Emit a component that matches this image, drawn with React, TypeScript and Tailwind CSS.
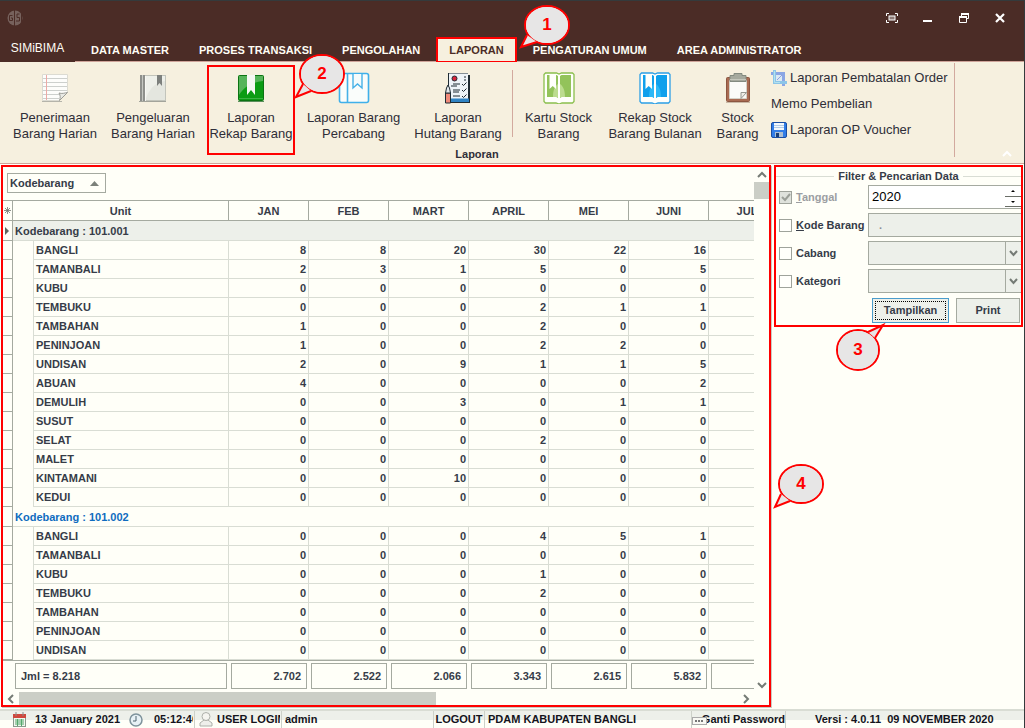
import type { ReactNode } from 'react';

const months = ['JAN', 'FEB', 'MART', 'APRIL', 'MEI', 'JUNI', 'JULI'];

type Row = [string, number[]];

const groups: { code: string; selected: boolean; rows: Row[] }[] = [
  {
    code: '101.001',
    selected: true,
    rows: [
      ['BANGLI', [8, 8, 20, 30, 22, 16]],
      ['TAMANBALI', [2, 3, 1, 5, 0, 5]],
      ['KUBU', [0, 0, 0, 0, 0, 0]],
      ['TEMBUKU', [0, 0, 0, 2, 1, 1]],
      ['TAMBAHAN', [1, 0, 0, 2, 0, 0]],
      ['PENINJOAN', [1, 0, 0, 2, 2, 0]],
      ['UNDISAN', [2, 0, 9, 1, 1, 5]],
      ['ABUAN', [4, 0, 0, 0, 0, 2]],
      ['DEMULIH', [0, 0, 3, 0, 1, 1]],
      ['SUSUT', [0, 0, 0, 0, 0, 0]],
      ['SELAT', [0, 0, 0, 2, 0, 0]],
      ['MALET', [0, 0, 0, 0, 0, 0]],
      ['KINTAMANI', [0, 0, 10, 0, 0, 0]],
      ['KEDUI', [0, 0, 0, 0, 0, 0]],
    ],
  },
  {
    code: '101.002',
    selected: false,
    rows: [
      ['BANGLI', [0, 0, 0, 4, 5, 1]],
      ['TAMANBALI', [0, 0, 0, 0, 0, 0]],
      ['KUBU', [0, 0, 0, 1, 0, 0]],
      ['TEMBUKU', [0, 0, 0, 2, 0, 0]],
      ['TAMBAHAN', [0, 0, 0, 0, 0, 0]],
      ['PENINJOAN', [0, 0, 0, 0, 0, 0]],
      ['UNDISAN', [0, 0, 0, 0, 0, 0]],
    ],
  },
];

const totals = ['2.702', '2.522', '2.066', '3.343', '2.615', '5.832', ''];

function Callout({ n, className, tail, cx, cy, rx, ry, w, h }: {
  n: number; className: string; tail: string; cx: number; cy: number; rx: number; ry: number; w: number; h: number;
}) {
  return (
    <svg className={`pointer-events-none absolute z-10 overflow-visible ${className}`} width={w} height={h} viewBox={`0 0 ${w} ${h}`}>
      <ellipse cx={cx} cy={cy} rx={rx} ry={ry} fill="#e7e6e6" stroke="#ff0000" strokeWidth="2" />
      <path d={tail} fill="#e7e6e6" stroke="#ff0000" strokeWidth="2" />
      <ellipse cx={cx} cy={cy} rx={rx - 1} ry={ry - 1} fill="#e7e6e6" />
      <text x={cx} y={cy + 5} textAnchor="middle" fontSize="17" fontWeight="700" fill="#ff0000" fontFamily="Liberation Sans, sans-serif">{n}</text>
    </svg>
  );
}

function PaperIcon() {
  return (
    <svg width="32" height="32" viewBox="0 0 32 32">
      <path d="M3.500 2.500h25v18l-8 8h-17z" fill="#fdfdfb" stroke="#dcdbd2" />
      <path d="M4 6.500h24M4 10.500h24M4 14.500h24M4 18.500h24M4 22.500h18M4 26.500h16" stroke="#cdd0cd" />
      <path d="M7.500 3v25" stroke="#edaaa6" />
      <path d="M28.500 20.500l-8 8c1-3 1-5-.5-7.500 3 1 5.500 0 8.500-.5z" fill="#e9eae5" stroke="#9b9c96" />
      <path d="M3 29.500h20" stroke="#b5b4aa" />
    </svg>
  );
}

function GrayBookIcon() {
  return (
    <svg width="32" height="32" viewBox="0 0 32 32">
      <rect x="3.500" y="3.500" width="25" height="25" fill="#e4e6df" stroke="#c2c4bb" />
      <path d="M9 26C14 14 20 10 28 9V4H9z" fill="#eef0ea" />
      <rect x="3" y="3" width="5" height="26" fill="#8e908c" />
      <path d="M5.500 3v26" stroke="#c6c8c3" />
      <path d="M8.500 4v25" stroke="#f8f8f4" />
      <path d="M20 3h5v11l-2.500-3-2.500 3z" fill="#7d807d" />
      <path d="M2 29.500h27" stroke="#a3a49b" />
    </svg>
  );
}

function GreenBookIcon() {
  return (
    <svg width="32" height="32" viewBox="0 0 32 32">
      <rect x="3.500" y="3.500" width="25" height="25" rx="1" fill="#0c9c14" stroke="#0b7413" />
      <path d="M4 4h24v5C17 10 9 15 4 23z" fill="#56b45a" />
      <path d="M4 26.500h24" stroke="#3cb143" />
      <path d="M3 29.500h26" stroke="#5b8f5c" />
      <path d="M12 3h8v20l-4-5-4 5z" fill="#f6f8f4" />
    </svg>
  );
}

function BlueOutlineBookIcon() {
  return (
    <svg width="32" height="32" viewBox="0 0 32 32">
      <rect x="1.500" y="1.500" width="29" height="29" rx="2" fill="#fafdfb" stroke="#3fb0ea" strokeWidth="1.600" />
      <path d="M9.500 2v28" stroke="#46b1e7" strokeWidth="1.600" />
      <path d="M15 2v14l4.500-4 4.500 4V2" fill="#f5fbfb" stroke="#46b1e7" strokeWidth="1.400" />
    </svg>
  );
}

function ChecklistIcon() {
  return (
    <svg width="32" height="32" viewBox="0 0 32 32">
      <path d="M6 1h20v2h2v28H8V29H6z" fill="#1f2b33" />
      <rect x="7" y="1.500" width="19" height="25.500" fill="#eef3f8" />
      <rect x="8" y="26.500" width="19" height="3.500" fill="#2f83c4" />
      <circle cx="12.500" cy="6.500" r="2.500" fill="#d9243b" stroke="#1f2b33" />
      <path d="M22 5h2M22 8h2M11 12h7M9 14h6M11 18h7M11 20h6M11 24h7" stroke="#1f2b33" />
      <path d="M20 12l1.500 1.500 3-3M20 18l1.500 1.500 3-3M20 24l1.500 1.500 3-3" stroke="#1f2b33" fill="none" />
      <path d="M3.500 21h5v10h-5z" fill="#f08a7a" stroke="#1f2b33" />
      <path d="M3.500 21l1-5 1.500-3 1.500 3 1 5z" fill="#e4e8ec" stroke="#1f2b33" />
    </svg>
  );
}

function OpenBookIcon({ edge, fill, light }: { edge: string; fill: string; light: string }) {
  return (
    <svg width="32" height="32" viewBox="0 0 32 32">
      <path d="M2.500 1h11L16 2l2.500-1h11L31 2.500v27L29.500 31H19l-3 1-3-1H2.500L1 29.500v-27z" fill="#fffffb" stroke={edge} strokeWidth="1.300" />
      <path d="M4 3h9.500l1.500 1v22l-1.500-1H4z" fill={fill} />
      <path d="M28 3h-9.500L17 4v22l1.500-1H28z" fill={fill} />
      <path d="M10 25c0-7 2-11 5-13v14l-1.500-1zM17 12c3 2 5 6 5 13h-3.500L17 26z" fill={light} />
      <path d="M6.500 2H13v15l-3.300-3-3.200 3z" fill="#fffffb" />
    </svg>
  );
}

function ClipboardIcon() {
  return (
    <svg width="32" height="32" viewBox="0 0 32 32">
      <rect x="4.500" y="5.500" width="23" height="24" rx="1" fill="#a96b52" stroke="#8c5641" />
      <path d="M7.500 8.500h17v18h-17z" fill="#fbfbf8" stroke="#d5d2c8" />
      <path d="M12 1.500h8v2h4v6H8v-6h4z" fill="#a5a99e" stroke="#838a80" />
      <path d="M8 7.500h16" stroke="#c4c7bd" />
      <path d="M24.500 20.500l-5.500 6v-6z" fill="#eeede6" stroke="#969891" />
      <path d="M4 30.500h24" stroke="#c9b8a6" />
    </svg>
  );
}

function CropIcon() {
  return (
    <svg width="16" height="16" viewBox="0 0 16 16" className="shrink-0">
      <rect x="4" y="4" width="8" height="8" fill="#dbeaf3" />
      <path d="M0 3.500h12.500V16" fill="none" stroke="#8ba6e4" strokeWidth="3" />
      <path d="M3.500 0v12.500H16" fill="none" stroke="#8cc5e8" strokeWidth="3" />
      <path d="M3.500 1v11.500H9" fill="none" stroke="#b5e2ee" strokeWidth="1" />
      <path d="M6 10l5-5" stroke="#8f9ee1" />
    </svg>
  );
}

function SaveIcon() {
  return (
    <svg width="16" height="16" viewBox="0 0 16 16" className="shrink-0">
      <rect x=".5" y=".5" width="15" height="15" rx="1.500" fill="#317de8" stroke="#1b4ea3" />
      <rect x="3" y="1" width="10" height="7" fill="#f3f8fc" />
      <path d="M3 3.500h10M3 5.500h10" stroke="#b3cbe6" />
      <rect x="4" y="10" width="8" height="5" fill="#aebfd2" />
      <rect x="5" y="11" width="3" height="4" fill="#173d78" />
    </svg>
  );
}

function Chevron({ d, label }: { d: string; label: string }) {
  return (
    <button type="button" aria-label={label} className="flex h-3 w-4 shrink-0 items-center justify-center">
      <svg width="10" height="10" viewBox="0 0 10 10"><path d={d} fill="none" stroke="#757b75" strokeWidth="2" /></svg>
    </button>
  );
}

function RibbonButton({ icon, lines, className }: { icon: ReactNode; lines: [string, string]; className: string }) {
  return (
    <button type="button" className={`flex h-[90px] shrink-0 flex-col items-center pt-[7px] text-[13px] leading-4 font-normal whitespace-nowrap ${className}`}>
      {icon}
      <span className="mt-1.5 flex flex-col items-center"><span>{lines[0]}</span><span>{lines[1]}</span></span>
    </button>
  );
}

function Tab({ children }: { children: ReactNode }) {
  return <button type="button" className="h-[26px] px-[14px] pt-1 text-[#fffdf5]">{children}</button>;
}

function Header() {
  return (
    <header className="relative z-20 flex flex-col border-t border-[#343a3c] bg-[#4b2c26]">
      <div className="flex h-[34px] items-center justify-between pr-[18px] pl-1.5 text-white">
        <svg width="18" height="18" viewBox="0 0 18 18">
          <circle cx="9" cy="9" r="7.500" fill="#76615c" />
          <path d="M8.500 1v16M6.500 6.500H3.500v5h3V9H5M13.500 5H11v3.500h2.500V12H10M15.500 5v8" stroke="#4b2c26" fill="none" />
        </svg>
        <div className="flex items-center gap-6">
          <button type="button" aria-label="Full screen">
            <svg width="12" height="12" viewBox="0 0 12 12"><path d="M.5 4V1.500H3M9 1.500h2.500V4M11.500 8v2.500H9M3 10.500H.5V8" fill="none" stroke="white" /><rect x="3" y="4" width="6" height="4" fill="#8d7a76" stroke="white" /></svg>
          </button>
          <button type="button" aria-label="Minimize">
            <svg width="12" height="12" viewBox="0 0 12 12"><path d="M1 9h9" stroke="white" strokeWidth="2" /></svg>
          </button>
          <button type="button" aria-label="Restore">
            <svg width="12" height="12" viewBox="0 0 12 12"><path d="M3.500 4V1.500h7v5H9" fill="none" stroke="white" /><path d="M3 2h8M1 5h8" stroke="white" strokeWidth="2" /><path d="M1.500 4.500h7v6h-7z" fill="none" stroke="white" /></svg>
          </button>
          <button type="button" aria-label="Close">
            <svg width="12" height="12" viewBox="0 0 12 12"><path d="M2 2l8 8M10 2l-8 8" stroke="white" strokeWidth="2.200" /></svg>
          </button>
        </div>
      </div>
      <nav className="flex h-[26px] gap-0.5 text-[11px] font-bold whitespace-nowrap">
        <button type="button" className="h-[27px] w-[75px] bg-[#4b2c26] pb-px text-[12px] font-normal text-[#fffdf5]">SIMiBIMA</button>
        <Tab>DATA MASTER</Tab>
        <Tab>PROSES TRANSAKSI</Tab>
        <Tab>PENGOLAHAN</Tab>
        <button type="button" className="mt-0.5 h-[26px] border-2 border-[#ff0000] bg-[#f6f0df] px-[11px] text-[#4b2c26]">LAPORAN</button>
        <Tab>PENGATURAN UMUM</Tab>
        <Tab>AREA ADMINISTRATOR</Tab>
      </nav>
      <Callout n={1} className="top-1 left-[519px]" w={52} h={44} cx={28} cy={20} rx={22} ry={19} tail="M8 30L2 42L18 37" />
    </header>
  );
}

function Ribbon() {
  return (
    <section className="relative z-30 flex border-b border-[#cfa49a] bg-[#f6f0df] text-[#2f2e38]">
      <div className="flex h-[101px] shrink-0 flex-col">
        <div className="flex pt-[3px] pl-[11px]">
          <div className="flex gap-[10px]">
            <RibbonButton icon={<PaperIcon />} lines={['Penerimaan', 'Barang Harian']} className="w-[88px]" />
            <RibbonButton icon={<GrayBookIcon />} lines={['Pengeluaran', 'Barang Harian']} className="w-[88px]" />
            <RibbonButton icon={<GreenBookIcon />} lines={['Laporan', 'Rekap Barang']} className="w-[88px] outline-2 -outline-offset-2 outline-[#ff0000]" />
            <RibbonButton icon={<BlueOutlineBookIcon />} lines={['Laporan Barang', 'Percabang']} className="w-[97px]" />
            <RibbonButton icon={<ChecklistIcon />} lines={['Laporan', 'Hutang Barang']} className="w-[92px]" />
          </div>
          <div className="mx-2 mt-[5px] h-[67px] w-px bg-[#d2a99e]" />
          <div className="flex gap-[10px]">
            <RibbonButton icon={<OpenBookIcon edge="#8bbf4d" fill="#93c35a" light="#bcdc8e" />} lines={['Kartu Stock', 'Barang']} className="w-[75px]" />
            <RibbonButton icon={<OpenBookIcon edge="#2b9fe6" fill="#0fa0ec" light="#2bb8f6" />} lines={['Rekap Stock', 'Barang Bulanan']} className="w-[98px]" />
            <RibbonButton icon={<ClipboardIcon />} lines={['Stock', 'Barang']} className="w-[47px]" />
            <div className="flex w-[183px] flex-col text-[13px] leading-4 font-normal whitespace-nowrap">
              <button type="button" className="flex h-[26px] items-center gap-[3px]"><CropIcon />Laporan Pembatalan Order</button>
              <button type="button" className="flex h-[26px] items-center">Memo Pembelian</button>
              <button type="button" className="flex h-[26px] items-center gap-[3px]"><SaveIcon />Laporan OP Voucher</button>
            </div>
          </div>
        </div>
        <div className="-mt-2 text-center text-[11px] leading-[14px] font-bold">Laporan</div>
      </div>
      <div className="mt-px h-[94px] w-px bg-[#d2a99e]" />
      <button type="button" aria-label="Collapse ribbon" className="mr-3 mb-1 ml-auto self-end">
        <svg width="10" height="10" viewBox="0 0 10 10"><path d="M1 7l4-4 4 4" fill="none" stroke="white" strokeWidth="2" /></svg>
      </button>
      <Callout n={2} className="-top-[9px] left-[294px]" w={54} h={48} cx={28} cy={21} rx={22} ry={19} tail="M9 31L2 44L17 38" />
    </section>
  );
}

function Grid() {
  return (
    <section className="relative mr-[3px] ml-px flex min-w-0 flex-1 flex-col border-2 border-[#ff0000] shadow-[1px_1px_0_#c9ccc4]">
      <div className="flex flex-1">
        <div className="min-w-0 flex-1 overflow-hidden">
          <button type="button" className="mt-1.5 mb-[7px] ml-1 flex h-5 w-[99px] items-center justify-between border border-[#a5aaa0] pr-1.5 pl-0.5">
            Kodebarang
            <svg width="9" height="5" viewBox="0 0 9 5"><path d="M0 5l4.500-5L9 5z" fill="#7c817a" /></svg>
          </button>
          <table className="w-[786px] min-w-full table-fixed border-separate border-spacing-0 leading-4">
            <colgroup>
              <col className="w-[10px]" />
              <col className="w-[21px]" />
              <col className="w-[195px]" />
              {months.map((m) => <col key={m} className="w-[80px]" />)}
            </colgroup>
            <thead>
              <tr className="h-[21px]">
                <th className="border-y border-r border-[#a5aaa0] p-0">
                  <svg width="9" height="9" viewBox="0 0 9 9"><path d="M4.500 1v7M1 4.500h7M2 2l5 5M7 2L2 7" stroke="#6f756f" strokeWidth=".8" /></svg>
                </th>
                <th colSpan={2} className="border-y border-r border-[#a5aaa0] p-0">Unit</th>
                {months.map((m) => <th key={m} className="border-y border-r border-[#a5aaa0] p-0">{m}</th>)}
              </tr>
            </thead>
            {groups.map((g) => (
              <tbody key={g.code}>
                <tr className="h-5">
                  <td className="border-r border-b border-[#a5aaa0] p-0">
                    {g.selected && <svg width="9" height="8" viewBox="0 0 9 8"><path d="M2 0l4 4-4 4z" fill="#5f655f" /></svg>}
                  </td>
                  <td colSpan={9} className={g.selected ? 'border-b border-[#d9ddd4] bg-[#edf0ea] p-0 pl-0.5' : 'border-b border-[#d9ddd4] p-0 pl-0.5 text-[#0f6cbf]'}>
                    Kodebarang : {g.code}
                  </td>
                </tr>
                {g.rows.map(([unit, values]) => (
                  <tr key={unit} className="h-[19px]">
                    <td className="border-r border-b border-[#a5aaa0] p-0" />
                    <td className="border-r border-[#d9ddd4] p-0" />
                    <td className="border-r border-b border-[#d9ddd4] p-0 pl-0.5">{unit}</td>
                    {months.map((m, i) => (
                      <td key={m} className="border-r border-b border-[#d9ddd4] p-0 pr-0.5 text-right">{values[i]}</td>
                    ))}
                  </tr>
                ))}
              </tbody>
            ))}
            <tfoot>
              <tr>
                <td className="border-t border-[#a5aaa0] p-0" />
                <td colSpan={2} className="border-t border-[#a5aaa0] p-0.5">
                  <div className="flex h-[26px] items-center border border-[#a5aaa0] px-[5px]">Jml = 8.218</div>
                </td>
                {totals.map((t, i) => (
                  <td key={months[i]} className="border-t border-[#a5aaa0] p-0.5">
                    <div className="flex h-[26px] items-center justify-end border border-[#a5aaa0] px-[5px]">{t}</div>
                  </td>
                ))}
              </tr>
            </tfoot>
          </table>
        </div>
        <div className="flex w-[15px] shrink-0 flex-col items-center">
          <div className="flex h-[15px] items-center"><Chevron label="Scroll up" d="M1 7l4-4 4 4" /></div>
          <div className="h-[17px] w-full bg-[#cbcec6]" />
          <div className="mt-auto"><Chevron label="Scroll down" d="M1 3l4 4 4-4" /></div>
        </div>
      </div>
      <div className="mt-px flex h-[13px] items-center pr-[15px]">
        <Chevron label="Scroll left" d="M7 1L3 5l4 4" />
        <div className="h-full flex-1"><div className="h-full w-[58%] bg-[#cbcec6]" /></div>
        <Chevron label="Scroll right" d="M3 1l4 4-4 4" />
      </div>
      <Callout n={4} className="top-[296px] -right-[56px]" w={52} h={46} cx={28} cy={21} rx={22} ry={19} tail="M8 31L2 44L17 38" />
    </section>
  );
}

function FilterRow({ id, label, hotkey, checked, children }: {
  id: string; label: string; hotkey?: boolean; checked?: boolean; children: ReactNode;
}) {
  return (
    <div className="flex h-6 items-center">
      <input
        id={id}
        type="checkbox"
        defaultChecked={checked}
        disabled={checked}
        className="peer h-[13px] w-[13px] shrink-0 appearance-none border border-[#9fa39b] bg-[#fffffb] disabled:bg-[#dfe2dc]"
      />
      {checked && (
        <svg className="pointer-events-none -ml-[13px]" width="13" height="13" viewBox="0 0 13 13"><path d="M3 6l3 3 5-6" fill="none" stroke="#9b9f98" strokeWidth="2" /></svg>
      )}
      <label htmlFor={id} className={checked ? 'w-[76px] shrink-0 pl-1 text-[#9c9ea2]' : 'w-[76px] shrink-0 pl-1'}>
        {hotkey ? <><u>{label[0]}</u>{label.slice(1)}</> : label}
      </label>
      {children}
    </div>
  );
}

function DisabledSelect({ label }: { label: string }) {
  return (
    <div className="flex h-6 min-w-0 flex-1 border border-r-0 border-[#a5aaa0] bg-[#edf0ea]">
      <select aria-label={label} disabled className="min-w-0 flex-1 appearance-none"><option> </option></select>
      <div className="flex w-4 items-center justify-center border-l border-[#a5aaa0]">
        <svg width="9" height="8" viewBox="0 0 9 8"><path d="M1 2l3.500 4L8 2" fill="none" stroke="#757b75" strokeWidth="2" /></svg>
      </div>
    </div>
  );
}

function Filter() {
  return (
    <aside className="relative mr-px w-[249px] shrink-0 self-start border-2 border-[#ff0000]">
      <form onSubmit={(e) => e.preventDefault()}>
        <h2 className="flex h-[18px] items-center gap-1 before:h-px before:flex-1 before:bg-[#d9ddd4] after:h-px after:flex-1 after:bg-[#d9ddd4]">Filter &amp; Pencarian Data</h2>
        <div className="flex flex-col gap-1 pl-[3px]">
          <FilterRow id="tanggal" label="Tanggal" hotkey checked>
            <div className="flex h-6 min-w-0 flex-1 border border-r-0 border-[#a5aaa0] bg-white">
              <input aria-label="Tahun" defaultValue="2020" className="min-w-0 flex-1 pl-[3px] text-[13px] font-normal text-black outline-none" />
              <div className="flex w-4 flex-col gap-px py-px">
                <button type="button" aria-label="Naik" className="flex flex-1 items-center justify-center border-b border-[#6a6e67]"><svg width="4" height="2" viewBox="0 0 4 2"><path d="M0 2L2 0l2 2z" /></svg></button>
                <button type="button" aria-label="Turun" className="flex flex-1 items-center justify-center border-b border-[#6a6e67]"><svg width="4" height="2" viewBox="0 0 4 2"><path d="M0 0l2 2 2-2z" /></svg></button>
              </div>
            </div>
          </FilterRow>
          <FilterRow id="kode" label="Kode Barang" hotkey>
            <input aria-label="Kode" disabled defaultValue="." className="h-6 min-w-0 flex-1 border border-r-0 border-[#a5aaa0] bg-[#edf0ea] pl-2.5 text-[#8b8f98]" />
          </FilterRow>
          <FilterRow id="cabang" label="Cabang"><DisabledSelect label="Pilihan cabang" /></FilterRow>
          <FilterRow id="kategori" label="Kategori"><DisabledSelect label="Pilihan kategori" /></FilterRow>
          <div className="flex justify-end gap-[7px] pt-px pr-px pb-0.5">
            <button type="submit" className="flex h-[25px] w-[77px] border border-[#4a9ccc] bg-[#edf0ea] p-0.5">
              <span className="flex flex-1 items-center justify-center self-stretch border border-dotted border-black">Tampilkan</span>
            </button>
            <button type="button" className="h-[25px] w-[64px] border border-[#a5aaa0] bg-[#edf0ea]">Print</button>
          </div>
        </div>
      </form>
      <Callout n={3} className="top-[154px] left-[61px]" w={50} h={50} cx={21} cy={29} rx={21} ry={20} tail="M31 11L46 4L38 17" />
    </aside>
  );
}

function StatusBar() {
  return (
    <footer className="flex h-[19px] items-center overflow-hidden border-t-2 border-[#d9ddd4] bg-linear-to-b from-[#edf0ea] from-55% to-[#fffff8] to-55% text-[#14141c] whitespace-nowrap">
      <div className="flex w-[129px] shrink-0 items-center gap-2 pl-3">
        <svg width="15" height="15" viewBox="0 0 15 15"><rect x="1.500" y="2.500" width="12" height="12" fill="#f3f7f0" stroke="#8a9a8d" /><rect x="1" y="2" width="13" height="4" fill="#d0483d" /><path d="M4 0v4M11 0v4" stroke="#8b8b88" /><path d="M3 8h9M3 10h9M3 12h9M5.500 7v7M9.500 7v7" stroke="#55a86d" /></svg>
        13 January 2021
      </div>
      <div className="flex h-full w-[66px] shrink-0 items-center gap-[11px] overflow-hidden border-r border-[#cdd1c9] pr-px">
        <svg width="14" height="14" viewBox="0 0 14 14" className="shrink-0"><circle cx="7" cy="7" r="6" fill="#e7f1f5" stroke="#7e939c" strokeWidth="1.500" /><path d="M7 3v5H4" fill="none" stroke="#4f6570" /></svg>
        <span className="overflow-hidden">05:12:46</span>
      </div>
      <div className="flex h-full w-[87px] shrink-0 items-center gap-1 overflow-hidden border-r border-[#cdd1c9] pr-px pl-1">
        <svg width="14" height="15" viewBox="0 0 14 15" className="shrink-0"><path d="M1 14v-3l4-3h4l4 3v3z" fill="#efefeb" stroke="#adb0aa" /><circle cx="7" cy="4.500" r="4" fill="#f5f5f0" stroke="#adb0aa" /></svg>
        <span className="overflow-hidden">USER LOGIN</span>
      </div>
      <div className="flex h-full w-[152px] shrink-0 items-center border-r border-[#cdd1c9] pl-[3px]">admin</div>
      <button type="button" className="h-full w-[51px] shrink-0 border-r border-[#cdd1c9]">LOGOUT</button>
      <div className="flex h-full flex-1 items-center border-r border-[#cdd1c9] pl-[3px]">PDAM KABUPATEN BANGLI</div>
      <button type="button" className="relative flex h-full w-[94px] shrink-0 items-center justify-end border-r border-[#cdd1c9]">
        Ganti Password
        <svg width="15" height="8" viewBox="0 0 15 8" className="absolute top-1.5 left-0"><rect x=".5" y=".5" width="14" height="7" fill="#f8f8f3" stroke="#aaa" /><path d="M3 4h2M6 4h2M9 4h2" stroke="#777" strokeWidth="2" /></svg>
      </button>
      <div className="w-[238px] shrink-0 pl-[29px] whitespace-pre">Versi : 4.0.11  09 NOVEMBER 2020</div>
    </footer>
  );
}

export default function App() {
  return (
    <div className="flex min-h-screen flex-col overflow-hidden border-r border-[#343a3c] bg-[#fffff8] font-['Liberation_Sans',Arial,sans-serif] text-[11px] font-bold text-[#363c48]">
      <Header />
      <div className="ml-[75px] h-px bg-[#cfa49a]" />
      <Ribbon />
      <main className="flex flex-1 pt-px pb-0.5">
        <Grid />
        <Filter />
      </main>
      <StatusBar />
    </div>
  );
}
